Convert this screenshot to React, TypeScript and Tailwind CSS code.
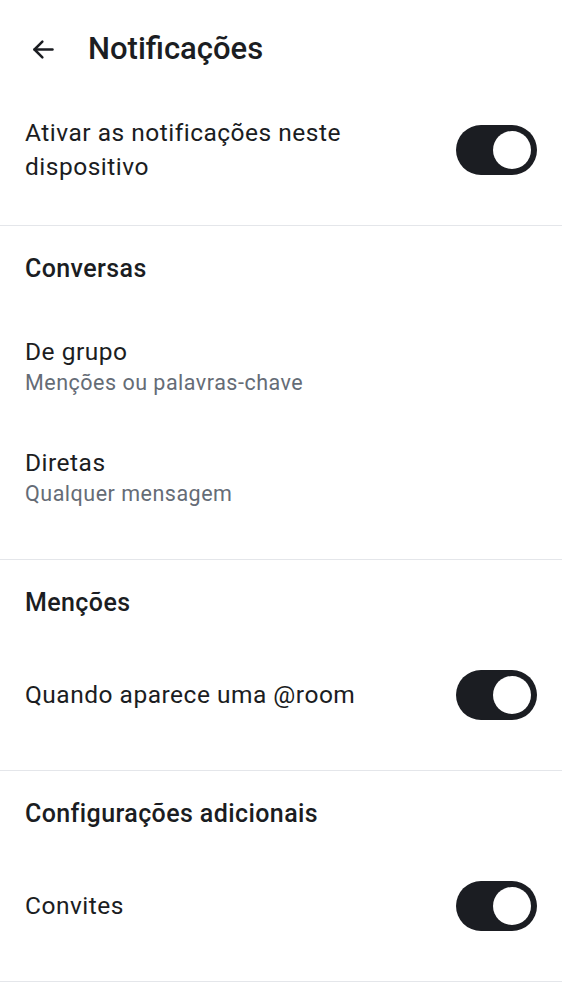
import React from "react";

function Toggle() {
  return (
    <div className="w-[81px] h-[50px] rounded-full bg-[#1b1d22] flex items-center justify-end pr-[6px] shrink-0">
      <div className="w-[38px] h-[38px] rounded-full bg-white" />
    </div>
  );
}

function SectionHeader({ children }: { children: React.ReactNode }) {
  return (
    <div className="pt-[28px] pb-[28px] px-[25px] text-[25px] leading-[30px] font-medium tracking-[0.4px] text-[#1b1d22]">
      {children}
    </div>
  );
}

function ToggleRow({ label }: { label: string }) {
  return (
    <div className="flex items-center justify-between px-[25px] py-[24px]">
      <div className="text-[24.5px] leading-[34px] tracking-[0.5px] text-[#1b1d22]">{label}</div>
      <Toggle />
    </div>
  );
}

function NavRow({ title, sub }: { title: string; sub: string }) {
  return (
    <div className="px-[25px] pt-[25px] pb-[24px]">
      <div className="text-[24.5px] leading-[30px] tracking-[0.5px] text-[#1b1d22]">{title}</div>
      <div className="text-[21.5px] leading-[32px] tracking-[0.5px] text-[#656c76]">{sub}</div>
    </div>
  );
}

export default function App() {
  return (
    <div
      className="w-[562px] h-[1000px] bg-white overflow-hidden"
      style={{ fontFamily: "Roboto, 'Noto Sans', sans-serif" }}
    >
      <div className="h-[98px] flex items-center pl-[30px]">
        <svg width="27" height="27" viewBox="0 0 24 24" fill="none" stroke="#1b1d22" strokeWidth="2.2" strokeLinecap="round" strokeLinejoin="round">
          <path d="M20 12H4" />
          <path d="M11 5l-7 7 7 7" />
        </svg>
        <div className="ml-[31px] text-[31px] font-medium text-[#1b1d22]">Notificações</div>
      </div>

      <div className="flex items-center justify-between pl-[25px] pr-[25px] pt-[18px] pb-[41px] border-b border-[#e4e6ea]">
        <div className="text-[24.5px] leading-[34px] tracking-[0.5px] text-[#1b1d22] w-[370px]">
          Ativar as notificações neste dispositivo
        </div>
        <Toggle />
      </div>

      <div className="pb-[25px] border-b border-[#e4e6ea]">
        <SectionHeader>Conversas</SectionHeader>
        <NavRow title="De grupo" sub="Menções ou palavras-chave" />
        <NavRow title="Diretas" sub="Qualquer mensagem" />
      </div>

      <div className="pb-[26px] border-b border-[#e4e6ea]">
        <SectionHeader>Menções</SectionHeader>
        <ToggleRow label="Quando aparece uma @room" />
      </div>

      <div className="pb-[26px] border-b border-[#e4e6ea]">
        <SectionHeader>Configurações adicionais</SectionHeader>
        <ToggleRow label="Convites" />
      </div>
    </div>
  );
}
